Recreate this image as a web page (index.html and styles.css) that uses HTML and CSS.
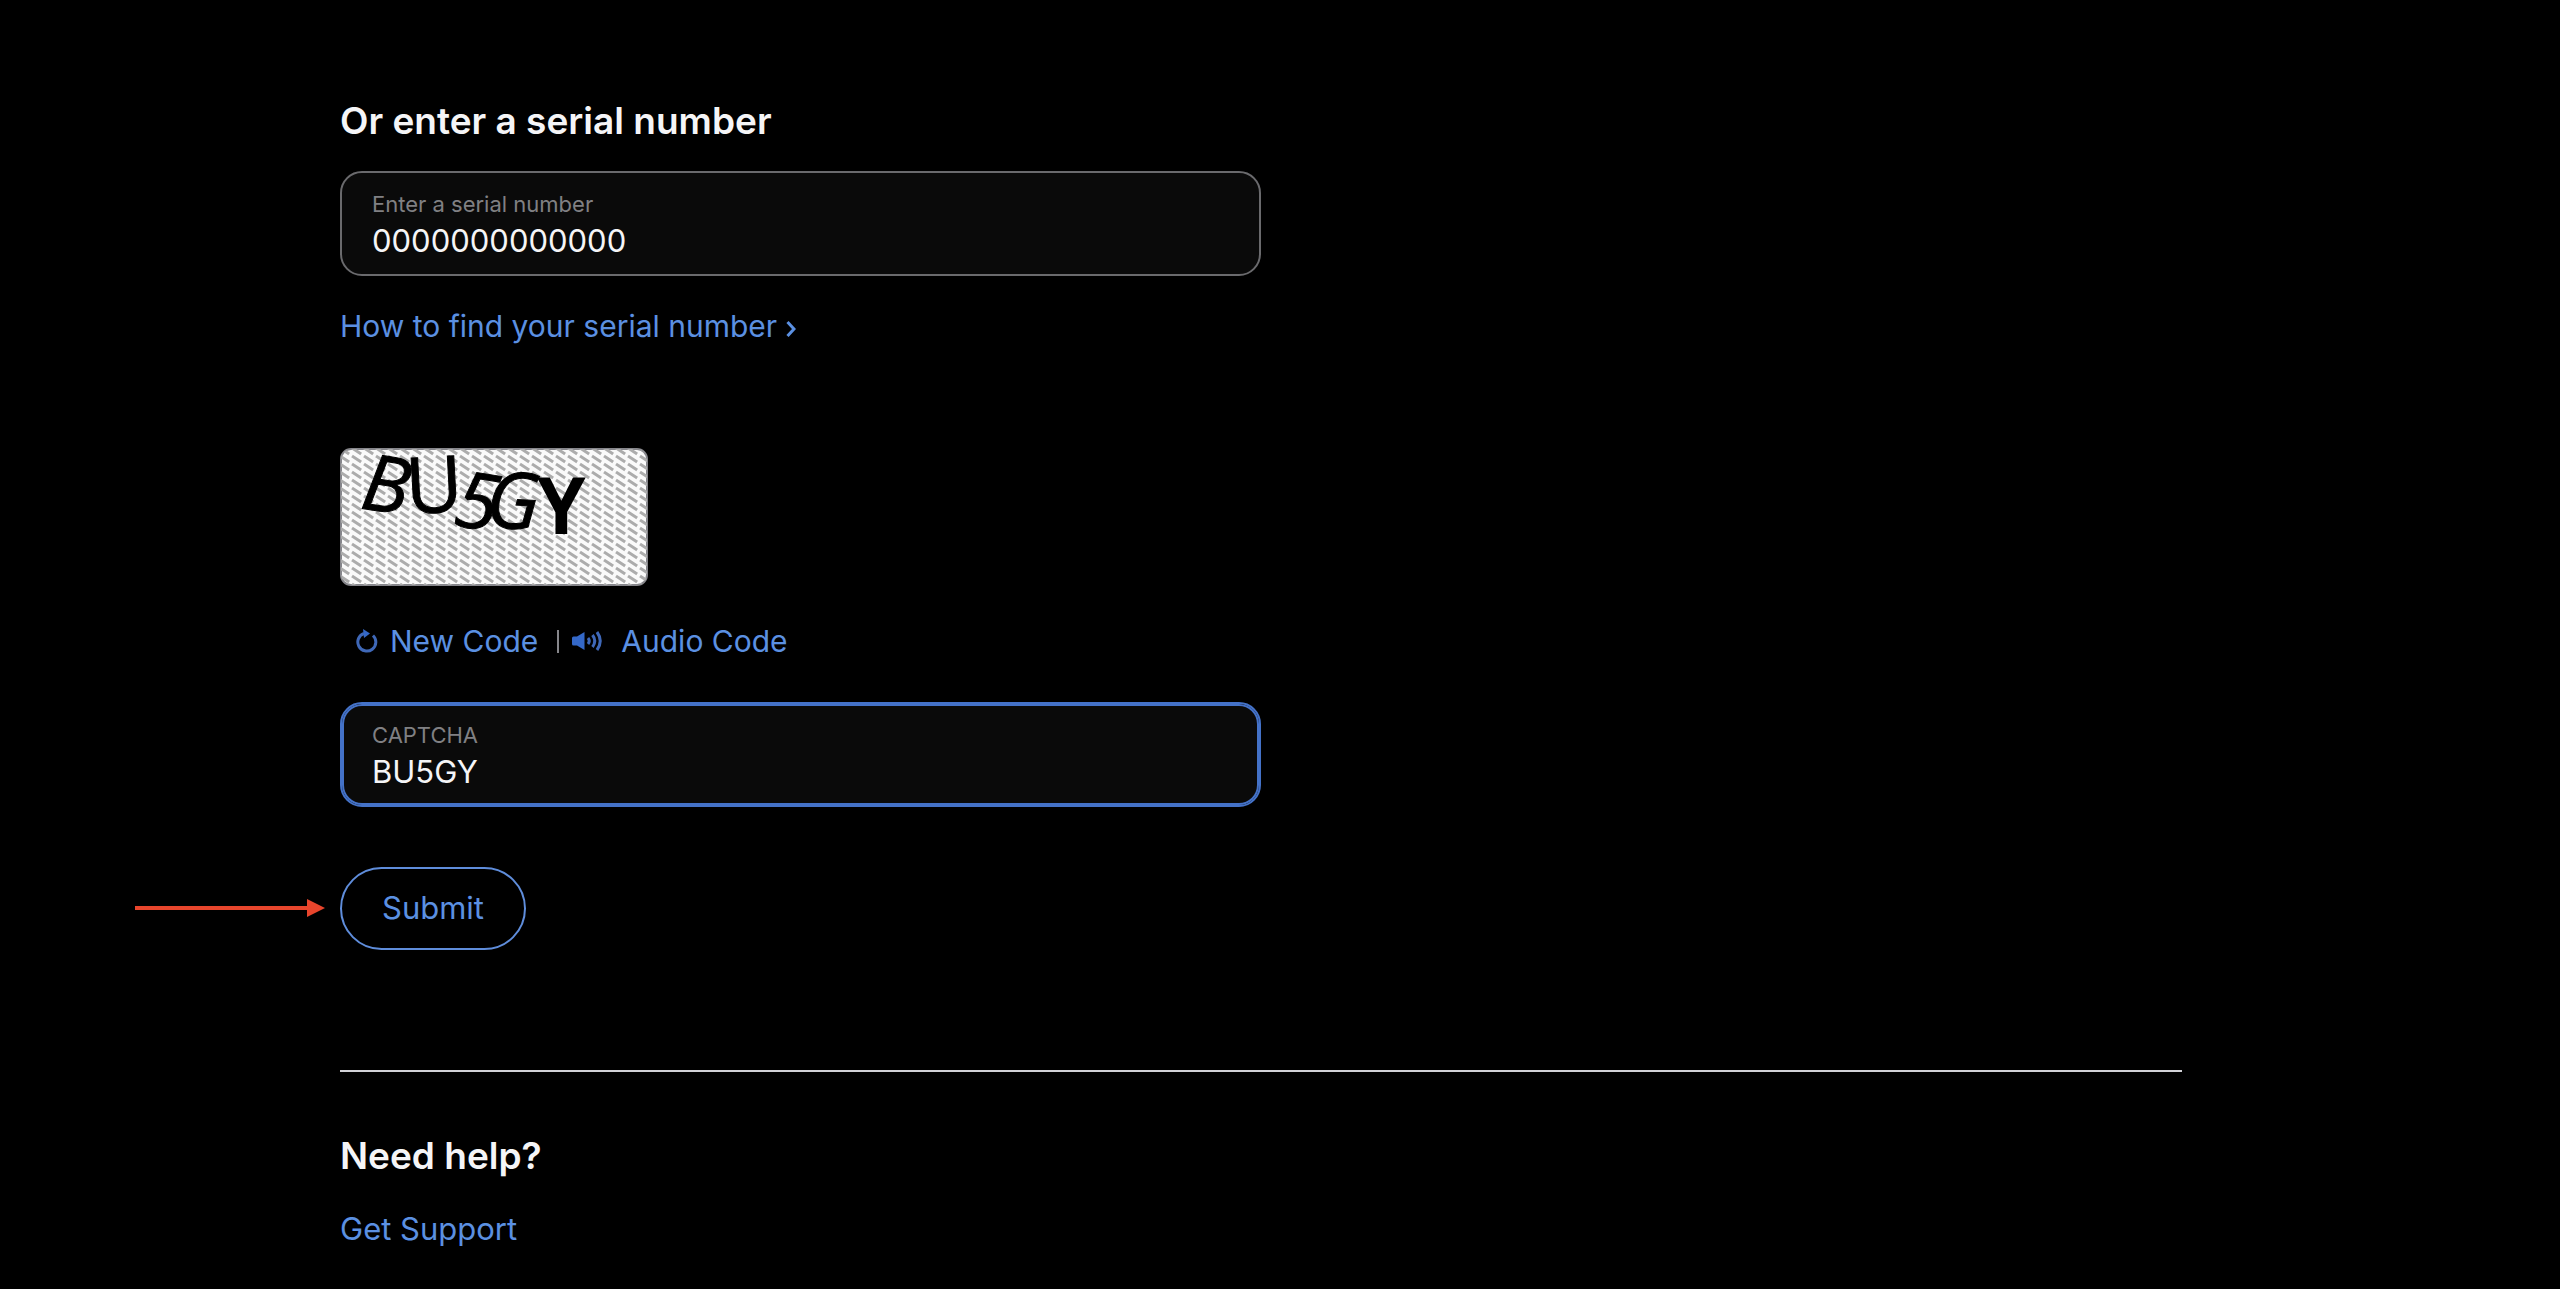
FILE: index.html
```html
<!DOCTYPE html>
<html lang="en">

<head>
    <meta charset="UTF-8">
    <meta name="viewport" content="width=device-width, initial-scale=1.0">
    <title>Enter a serial number</title>
    <link rel="stylesheet" href="styles.css">
</head>

<body>
    <main class="page">
        <form class="serial-form">
            <h2>Or enter a serial number</h2>
            <div class="field">
                <label for="serial">Enter a serial number</label>
                <input id="serial" type="text" value="0000000000000">
            </div>
            <a class="help-link" href="#">How to find your serial number
                <svg class="chevron" viewBox="0 0 10 18" aria-hidden="true"><path d="M1.500 3l6.500 7-6.500 7"/></svg>
            </a>

            <svg class="captcha-image" viewBox="0 0 308 138" role="img" aria-label="Captcha">
                <defs>
                    <pattern id="stripes" width="12" height="8" patternUnits="userSpaceOnUse">
                        <path d="M-12 -8L24 16M-12 0L12 16M0 -8L24 8"/>
                    </pattern>
                </defs>
                <rect class="frame" x="1" y="1" width="306" height="136" rx="10"/>
                <rect x="1" y="1" width="306" height="136" rx="10" fill="url(#stripes)"/>
                <text class="slant" transform="translate(19 60) rotate(9)">B</text>
                <text transform="translate(67 66) rotate(-3)">U</text>
                <text class="slant" transform="translate(112 77) rotate(9)">5</text>
                <text class="slant" transform="translate(145 79) rotate(3)">G</text>
                <text class="heavy" transform="translate(197 86)">Y</text>
            </svg>

            <div class="code-actions">
                <a href="#">
                    <svg class="icon-reload" viewBox="0 0 22 24" aria-hidden="true">
                        <path d="M8 4.500A9 9 0 1 0 17 6.500"/>
                        <path class="solid" d="M7 0l7 4.500L8 9z"/>
                    </svg>
                    New Code
                </a>
                <span class="bar"></span>
                <a class="audio" href="#">
                    <svg class="icon-audio" viewBox="0 0 30 22" aria-hidden="true">
                        <path class="solid" d="M0 8q0-1.500 1.500-1.500H5L12.500 2v18L5 15.500H1.500Q0 15.500 0 14z"/>
                        <path d="M16 8q2.500 3 0 6M20.500 5q4.500 6 0 12M25 2q6.500 9 0 18"/>
                    </svg>
                    Audio Code
                </a>
            </div>

            <div class="field active">
                <label for="captcha">CAPTCHA</label>
                <input id="captcha" type="text" value="BU5GY">
            </div>
            <div class="submit-row">
                <svg class="arrow" viewBox="0 0 192 20" aria-hidden="true">
                    <path d="M1 8h172V1l18 9-18 9v-7H1z"/>
                </svg>
                <button type="button">Submit</button>
            </div>
        </form>

        <section class="support">
            <h2>Need help?</h2>
            <a href="#">Get Support</a>
        </section>
    </main>
</body>

</html>
```

FILE: styles.css
```css
* {
    box-sizing: border-box;
}

body {
    margin: 0;
    background-color: #000000;
    color: #f5f5f7;
    font-family: Inter, sans-serif;
    font-size: 31px;
    line-height: 46px;
}

.page {
    padding: 98px 378px 30px 340px;
}

.serial-form {
    width: 50%;
}

h2 {
    margin: 0;
    font-size: 37px;
    font-weight: 600;
    line-height: 46px;
}

a {
    color: #5b90e2;
    text-decoration: none;
}

.field {
    margin-top: 27px;
    padding: 16px 30px 12px;
    border: 2px solid #6a6a6d;
    border-radius: 22px;
    background-color: #0a0a0a;
}

.field label {
    display: block;
    color: #808083;
    font-size: 22px;
    line-height: 30px;
}

.field input {
    display: block;
    width: 100%;
    height: 43px;
    padding: 0;
    border: none;
    outline: none;
    background: transparent;
    color: #f5f5f7;
    font: inherit;
}

.field.active {
    margin-top: 38px;
    border-color: #4472c8;
    box-shadow: inset 0 0 0 2px #4472c8;
}

.help-link {
    display: block;
    margin-top: 27px;
    font-size: 30px;
}

.chevron {
    width: 10px;
    height: 18px;
    fill: none;
    stroke: #5b90e2;
    stroke-width: 3;
}

.captcha-image {
    display: block;
    width: 308px;
    height: 138px;
    margin-top: 99px;
    overflow: visible;
    font-family: "Open Sans", sans-serif;
    font-size: 78px;
}

.frame {
    fill: #fafafa;
    stroke: #86868b;
    stroke-width: 2;
}

/* broken diagonal lines behind the letters */
.captcha-image pattern path {
    stroke: #acacac;
    stroke-width: 3;
    stroke-dasharray: 11 3.422;
}

.captcha-image text {
    stroke: #000000;
    stroke-width: 1;
}

.slant {
    font-style: italic;
}

.captcha-image .heavy {
    font-weight: 700;
    stroke: none;
}

.code-actions {
    display: flex;
    align-items: center;
    margin-top: 32px;
    padding-left: 16px;
    font-size: 30px;
}

.code-actions a {
    display: flex;
    align-items: center;
    gap: 12px;
}

.code-actions svg {
    fill: none;
    stroke: #3f68b8;
    stroke-width: 3;
}

.code-actions .solid {
    fill: #3468c8;
    stroke: none;
}

.icon-reload {
    width: 22px;
    height: 24px;
}

.icon-audio {
    width: 30px;
    height: 22px;
}

.bar {
    width: 2px;
    height: 23px;
    margin: 0 13px 0 19px;
    background-color: #86868b;
}

.code-actions .audio {
    gap: 19px;
}

.submit-row {
    position: relative;
    margin-top: 60px;
}

/* pointer that sits left of the button */
.arrow {
    position: absolute;
    top: 31px;
    left: -206px;
    width: 192px;
    height: 20px;
    fill: #e8452c;
}

button {
    display: block;
    padding: 16px 40px 17px;
    border: 2px solid #5f8ddb;
    border-radius: 42px;
    background-color: transparent;
    color: #5b90e2;
    font: inherit;
    cursor: pointer;
}

.support {
    margin-top: 120px;
    padding-top: 61px;
    border-top: 2px solid #d2d2d7;
}

.support a {
    display: block;
    margin-top: 27px;
}
```
